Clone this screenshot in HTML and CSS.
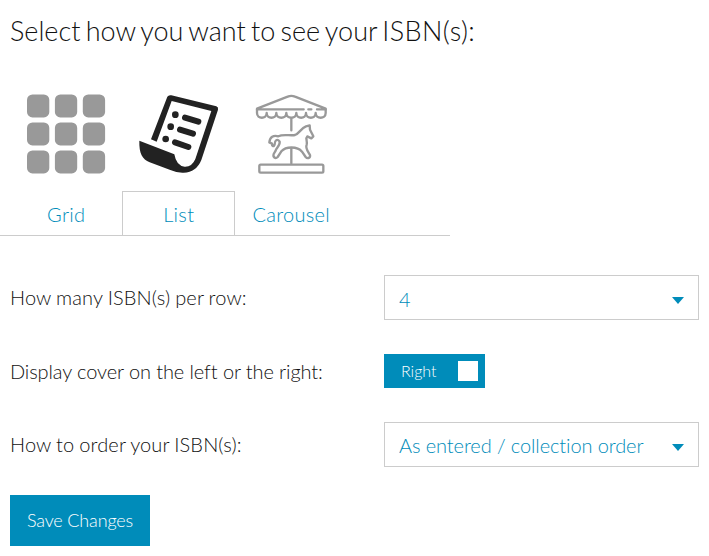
FILE: index.html
```
<!DOCTYPE html>
<html lang="en">
<head>
  <meta charset="UTF-8">
  <title>ISBN Display Settings</title>
  <meta name="viewport" content="width=device-width, initial-scale=1.0">
  <link rel="stylesheet" href="styles.css">
</head>
<body>

<form class="settings">
  <h1 class="title">Select how you want to see your <span class="isbn">ISBN(s):</span></h1>

  <!-- Layout Tabs -->
  <div class="tabs">
    <a class="tab" href="#">
      <svg class="tab-icon" viewBox="16 85 100 100" fill="#999">
        <rect x="27" y="94.4" width="22.3" height="23" rx="5.5"/>
        <rect x="54.9" y="94.4" width="22.3" height="23" rx="5.5"/>
        <rect x="82.8" y="94.4" width="22.3" height="23" rx="5.5"/>
        <rect x="27" y="122.4" width="22.3" height="23" rx="5.5"/>
        <rect x="54.9" y="122.4" width="22.3" height="23" rx="5.5"/>
        <rect x="82.8" y="122.4" width="22.3" height="23" rx="5.5"/>
        <rect x="27" y="150.4" width="22.3" height="23" rx="5.5"/>
        <rect x="54.9" y="150.4" width="22.3" height="23" rx="5.5"/>
        <rect x="82.8" y="150.4" width="22.3" height="23" rx="5.5"/>
      </svg>
      <span class="tab-label">Grid</span>
    </a>
    <a class="tab active" href="#">
      <svg class="tab-icon" viewBox="-4 0 300 300" fill="#222">
        <path d="M62 163 L111 35 Q115 29 123 31 L258 64 Q265 67 263 74 L213 225 Q198 262 160 263 Q140 264 120 255 L58 232 C36 222 26 206 27 167 L132 208 Q138 243 163 245 Q185 246 195 222 L243 78 L124 48 L79 170Z"/>
        <circle cx="135" cy="89" r="10"/>
        <circle cx="121" cy="125" r="10"/>
        <circle cx="106" cy="162" r="10"/>
        <path d="M164 98 L204 110 M149 134 L188 146 M134 172 L174 186" stroke="#222" stroke-width="18" stroke-linecap="round"/>
      </svg>
      <span class="tab-label">List</span>
    </a>
    <a class="tab" href="#">
      <svg class="tab-icon" viewBox="2 0 300 300" fill="none" stroke="#999" stroke-width="7" stroke-linecap="round" stroke-linejoin="round">
        <!-- canopy -->
        <path d="M190 73 H50 V71 L142 35 Q153 30 164 35 L256 71 V73 H230 M204 73 H213"/>
        <path d="M50 73 V84 C50 103 79 103 79 84 C79 103 108 103 108 84 C108 103 138 103 138 84 C138 103 168 103 168 84 C168 103 197 103 197 84 C197 103 226 103 226 84 C226 103 256 103 256 84 V73"/>
        <!-- pole and base -->
        <path d="M153 101 V136 M153 190 V235"/>
        <rect x="57" y="239" width="192" height="24" rx="4"/>
        <!-- horse -->
        <path d="M87 172 C89 156 99 150 114 154 C128 146 149 153 164 150 C176 146 182 130 197 124 L208 121 L209 134 L219 154 L213 160 L201 154 C194 160 202 169 199 179 C194 189 203 199 209 210 C211 218 202 223 196 216 L185 200 C171 183 136 184 123 199 L112 216 C105 223 97 216 100 207 L106 197 C107 189 120 182 118 170 C111 159 103 166 103 178 C101 187 94 184 95 176 Z"/>
      </svg>
      <span class="tab-label">Carousel</span>
    </a>
  </div>

  <!-- Options -->
  <div class="row">
    <label for="perRow">How many ISBN(s) per row:</label>
    <div class="select">
      <select id="perRow">
        <option>4</option>
      </select>
    </div>
  </div>

  <div class="row">
    <span class="row-label">Display cover on the left or the right:</span>
    <button type="button" class="switch"><span>Right</span><i class="knob"></i></button>
  </div>

  <div class="row">
    <label for="order">How to order your ISBN(s):</label>
    <div class="select">
      <select id="order" class="order">
        <option>As entered / collection order</option>
      </select>
    </div>
  </div>

  <button type="button" class="save">Save Changes</button>
</form>

</body>
</html>
```
FILE: styles.css
```
* { box-sizing: border-box; }

body {
  margin: 0;
  background: #fff;
  color: #111;
  font-family: Lato, sans-serif;
  font-weight: 300;
  font-size: 20px;
  font-variant-ligatures: none;
}

.title {
  margin: 0;
  padding: 11px 10px 0;
  height: 85px;
  font-size: 27px;
  font-weight: 300;
  line-height: 40px;
  word-spacing: -2px;
}

.isbn { letter-spacing: 0.4px; }

/* Layout Tabs */
.tabs {
  display: flex;
  width: 450px;
  height: 151px;
  padding-left: 10px;
  border-bottom: 1px solid #ccc;
}

.tab {
  display: flex;
  flex-direction: column;
  align-items: center;
  width: 112.5px;
  color: #008cba;
  text-decoration: none;
}

.tab-icon {
  width: 100px;
  height: 100px;
  margin-bottom: 6px;
}

.tab-label {
  width: 113px;
  height: 44px;
  border: 1px solid transparent;
  border-bottom: none;
  line-height: 45px;
  letter-spacing: 0.3px;
  text-align: center;
}

.tab.active .tab-label {
  border-color: #ccc;
}

/* Options */
.row {
  display: grid;
  grid-template-columns: 374px 315px;
  align-items: center;
  height: 45px;
  margin: 39px 10px 0;
}

.row + .row { margin-top: 28.5px; }

.row label {
  padding-bottom: 2px;
  letter-spacing: 0.13px;
  word-spacing: -0.6px;
}

.row-label { letter-spacing: -0.1px; }

.select { position: relative; }

.select::after {
  content: "";
  position: absolute;
  top: 22px;
  right: 15px;
  border: 6.5px solid transparent;
  border-width: 7px 6.5px 0;
  border-top-color: #008cba;
  pointer-events: none;
}

select {
  display: block;
  width: 100%;
  height: 45px;
  padding: 2px 14px 0;
  border: 1px solid #ccc;
  border-radius: 0;
  background: #fff;
  color: #008cba;
  font: inherit;
  letter-spacing: -0.1px;
  appearance: none;
}

select.order { padding-top: 0; }

.switch {
  display: flex;
  align-items: center;
  justify-content: space-between;
  width: 101px;
  height: 34px;
  padding: 0 7px 0 17px;
  border: none;
  background: #008cba;
  color: #fff;
  font: inherit;
  font-size: 16px;
}

.switch span { padding-bottom: 2px; }

.knob {
  width: 20px;
  height: 20px;
  background: #fff;
}

.save {
  display: block;
  width: 140px;
  height: 51px;
  margin: 28px 10px 0;
  padding: 0 0 2px;
  border: none;
  background: #008cba;
  color: #fff;
  font: inherit;
  font-size: 18px;
  letter-spacing: -0.15px;
}
```
